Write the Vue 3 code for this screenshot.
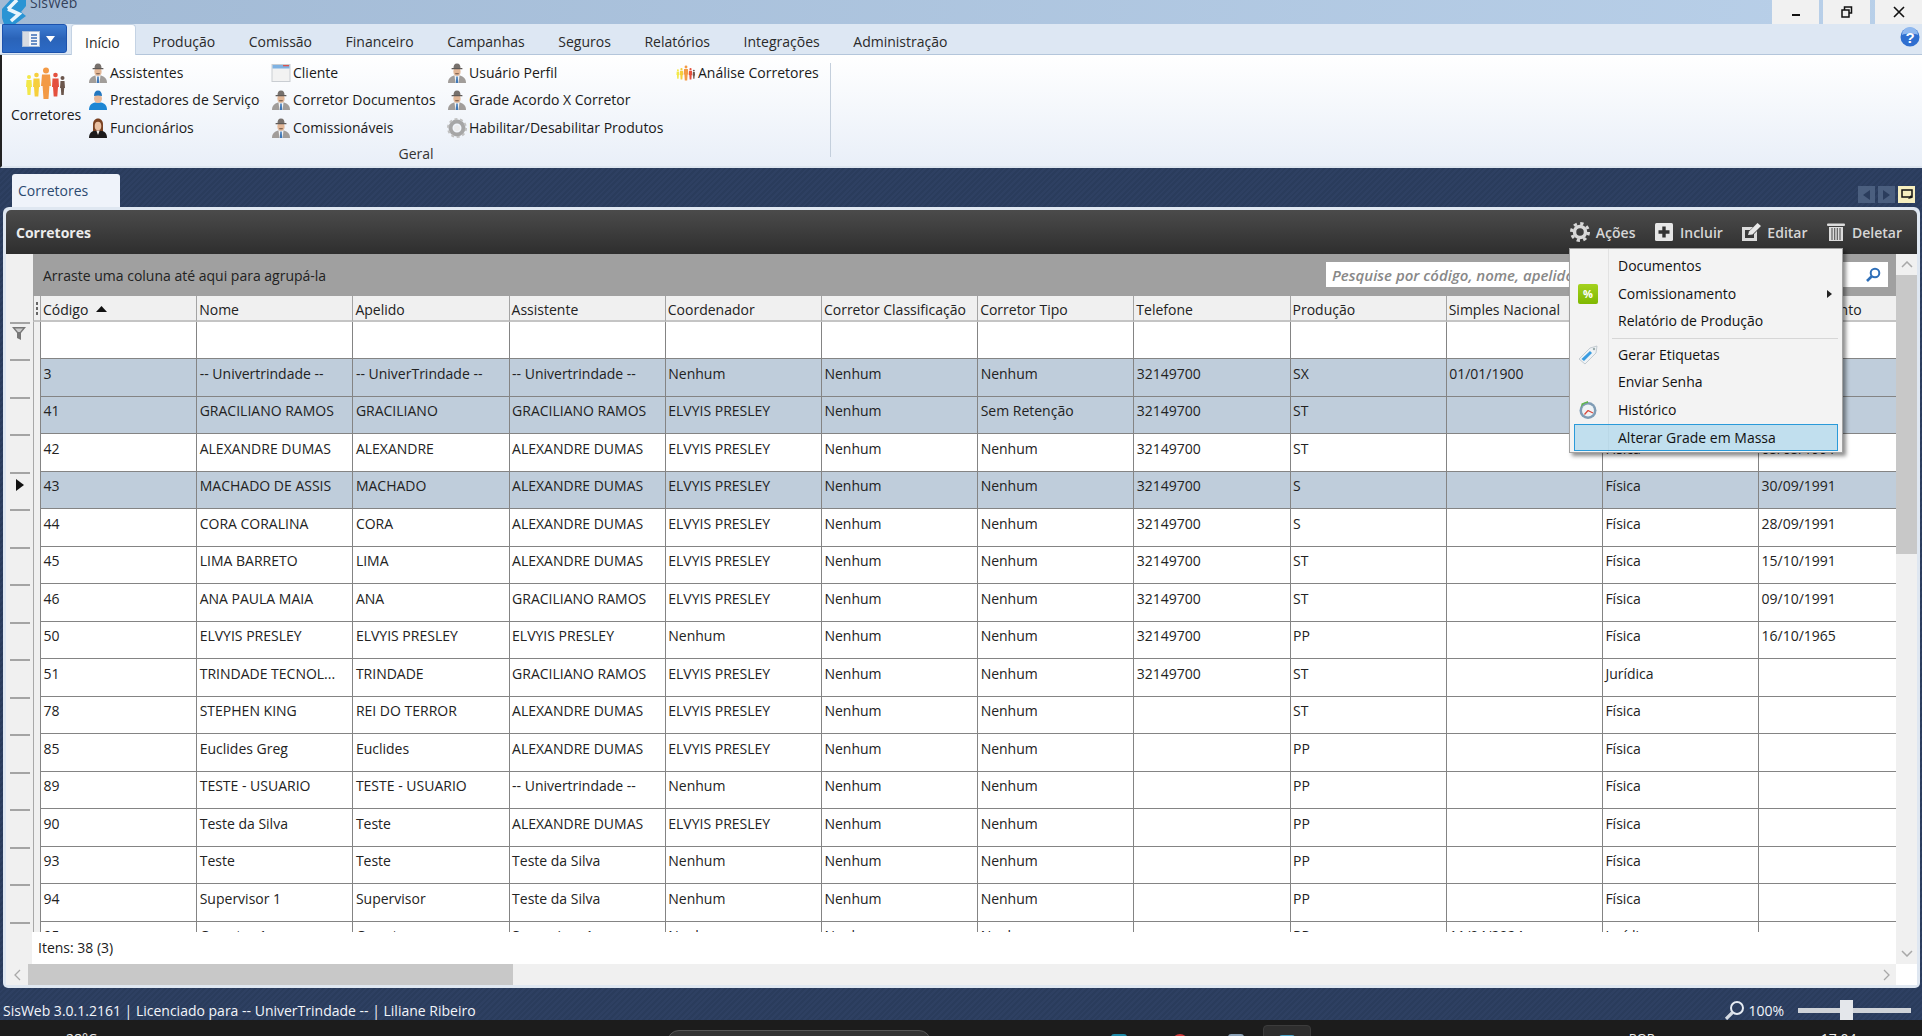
<script setup>
const tabs = ['Início','Produção','Comissão','Financeiro','Campanhas','Seguros','Relatórios','Integrações','Administração']
const ribbonCols = [
  { w: 183, items: [['suit','Assistentes'],['cap','Prestadores de Serviço'],['woman','Funcionários']] },
  { w: 176, items: [['win','Cliente'],['suit','Corretor Documentos'],['suit','Comissionáveis']] },
  { w: 229, items: [['suit','Usuário Perfil'],['suit','Grade Acordo X Corretor'],['gearc','Habilitar/Desabilitar Produtos']] },
  { w: 150, items: [['crowd','Análise Corretores']] },
]
const headers = ['Código','Nome','Apelido','Assistente','Coordenador','Corretor Classificação','Corretor Tipo','Telefone','Produção','Simples Nacional','Tipo Pessoa','Dt. Nascimento']
const U='-- Univertrindade --', E='ELVYIS PRESLEY', A='ALEXANDRE DUMAS', G='GRACILIANO RAMOS', N='Nenhum', T='32149700', F='Física', S='Teste da Silva'
const rows = [
  { sel:true, c:['3',U,'-- UniverTrindade --',U,N,N,N,T,'SX','01/01/1900','',''] },
  { sel:true, c:['41',G,'GRACILIANO',G,E,N,'Sem Retenção',T,'ST','','Física','01/01/1960'] },
  { c:['42',A,'ALEXANDRE',A,E,N,N,T,'ST','',F,'05/05/1991'] },
  { sel:true, cur:true, c:['43','MACHADO DE ASSIS','MACHADO',A,E,N,N,T,'S','',F,'30/09/1991'] },
  { c:['44','CORA CORALINA','CORA',A,E,N,N,T,'S','',F,'28/09/1991'] },
  { c:['45','LIMA BARRETO','LIMA',A,E,N,N,T,'ST','',F,'15/10/1991'] },
  { c:['46','ANA PAULA MAIA','ANA',G,E,N,N,T,'ST','',F,'09/10/1991'] },
  { c:['50',E,E,E,N,N,N,T,'PP','',F,'16/10/1965'] },
  { c:['51','TRINDADE TECNOL...','TRINDADE',G,E,N,N,T,'ST','','Jurídica',''] },
  { c:['78','STEPHEN KING','REI DO TERROR',A,E,N,N,'','ST','',F,''] },
  { c:['85','Euclides Greg','Euclides',A,E,N,N,'','PP','',F,''] },
  { c:['89','TESTE - USUARIO','TESTE - USUARIO',U,N,N,N,'','PP','',F,''] },
  { c:['90','Teste da Silva','Teste',A,E,N,N,'','PP','',F,''] },
  { c:['93','Teste','Teste',S,N,N,N,'','PP','',F,''] },
  { c:['94','Supervisor 1','Supervisor',S,N,N,N,'','PP','',F,''] },
  { c:['95','Corretor 1','Corretor','Supervisor 1',N,N,N,'','PP','11/04/2024','Jurídica',''] },
]
</script>

<template>
  <div class="app">
    <svg class="defs" width="0" height="0">
      <defs>
        <symbol id="suit" viewBox="0 0 20 20">
          <path d="M1 20c0-4.500 2.500-6.500 6-7.500h6c3.500 1 6 3 6 7.500z" fill="#a19d9a"/>
          <path d="M7.500 12.500h5L11.500 20h-3z" fill="#f2f4f6"/><path d="M9.300 13.500h1.400l.5 6.500H8.800z" fill="#3f78b8"/>
          <ellipse cx="10" cy="8.500" rx="3.600" ry="4.300" fill="#e2b797"/>
          <path d="M6.500 5.500C6.500 2 7.500.5 10 .5s3.500 1.500 3.500 5z" fill="#77716d"/>
          <rect x="4.500" y="5" width="11" height="1.300" rx=".6" fill="#5f5a57"/>
          <path d="M8 10.200h4l-.6 1h-2.800z" fill="#6b5040"/>
        </symbol>
        <symbol id="cap" viewBox="0 0 20 20">
          <path d="M1 20c0-5 3-7 6-7.500h6c3 .5 6 2.500 6 7.500z" fill="#1d86d4"/>
          <ellipse cx="10" cy="8.500" rx="4" ry="4.500" fill="#e8b898"/>
          <path d="M6 6c0-3.500 1.500-5.500 4-5.500s4 2 4 5.500c-2.500-.7-5.500-.7-8 0z" fill="#2277c0"/>
        </symbol>
        <symbol id="woman" viewBox="0 0 20 20">
          <path d="M1 20c0-5 3-7 6-7.500h6c3 .5 6 2.500 6 7.500z" fill="#1d1b1b"/>
          <path d="M5 13V6.500C5 3 7 .5 10 .5s5 2.500 5 6V13z" fill="#7a4222"/>
          <ellipse cx="10" cy="8" rx="3.300" ry="4.300" fill="#e9c0a2"/>
          <path d="M8.300 12.500h3.400L10 17z" fill="#f3ece6"/>
        </symbol>
        <symbol id="win" viewBox="0 0 20 20">
          <rect x="1" y="1.500" width="18" height="17" fill="#f2f2f2" stroke="#c9cdd2"/>
          <rect x="1.500" y="2" width="17" height="3.500" fill="#7fb2e2"/>
          <rect x="12" y="2" width="6" height="1.300" fill="#d9534f"/>
        </symbol>
        <symbol id="gearc" viewBox="0 0 20 20">
          <circle cx="10" cy="10" r="6.500" fill="none" stroke="#a6a6a6" stroke-width="4"/>
          <circle cx="10" cy="10" r="9" fill="none" stroke="#c0c0c0" stroke-width="2" stroke-dasharray="3 2.650"/>
          <circle cx="10" cy="10" r="3" fill="#ececec"/>
        </symbol>
        <symbol id="crowd" viewBox="0 0 42 32">
          <g fill="#f2e84a"><circle cx="4" cy="10" r="2"/><path d="M1.500 13h5l.5 7H6l-.5 8h-3L2 20H1z"/></g>
          <g fill="#f6cf3c"><circle cx="11.500" cy="8" r="2.300"/><path d="M8.500 11.500h6l.5 8.500h-1l-.7 9.500H9.700L9 20H8z"/></g>
          <g fill="#f39a45"><circle cx="21" cy="3.500" r="3"/><path d="M17 7.500h8l1 11.500h-1.600L23.500 32h-5L17.600 19H16z"/></g>
          <g fill="#e4503e"><circle cx="30.500" cy="8" r="2.300"/><path d="M27.500 11.500h6l.5 8.500h-1l-.7 9.500h-3.600L28 20h-1z"/></g>
          <g fill="#6b564c"><circle cx="37.500" cy="11" r="2"/><path d="M35.500 14h4l.5 7h-.8l-.5 7h-2.400l-.5-7H35z"/></g>
        </symbol>
      </defs>
    </svg>

    <header class="titlebar">
      <svg class="logo" viewBox="0 0 24 24" width="24" height="24">
        <path d="M0 9 L10 -2 H24 V6 L19 12 L24 16 L12 25 L2 24 L0 18 Z" fill="#2a94d4"/>
        <path d="M6 9 L15 0 M6 9 L17 14 L9 21" fill="none" stroke="#eaf5fc" stroke-width="3.600"/>
      </svg>
      <span class="apptitle">SisWeb</span>
      <div class="winbtns">
        <span class="winbtn"><svg width="10" height="10" viewBox="0 0 10 10"><rect x="1" y="7" width="8" height="2" fill="#111"/></svg></span>
        <span class="winbtn"><svg width="12" height="12" viewBox="0 0 12 12"><path d="M3.500 3.500V1h7v6H8M1 4h7v7H1z" fill="none" stroke="#111" stroke-width="1.500"/></svg></span>
        <span class="winbtn last"><svg width="12" height="12" viewBox="0 0 12 12"><path d="M1 1l10 10M11 1L1 11" stroke="#111" stroke-width="1.600"/></svg></span>
      </div>
    </header>

    <nav class="ribbontabs">
      <button class="startbtn">
        <svg width="18" height="16" viewBox="0 0 18 16"><rect x=".5" y=".5" width="17" height="15" fill="#f4f6f9" stroke="#a8bcd8"/><rect x="1" y="1" width="6" height="14" fill="#d7dbe2"/><path d="M9 4h6M9 7h6M9 10h6M9 13h6" stroke="#3b6db5" stroke-width="1.400"/></svg>
        <svg width="9" height="6" viewBox="0 0 9 6"><path d="M0 0h9L4.500 6z" fill="#fff"/></svg>
      </button>
      <span v-for="(t,i) in tabs" :key="t" class="rtab" :class="{active:i===0}">{{ t }}</span>
      <svg class="help" width="20" height="20" viewBox="0 0 20 20"><circle cx="10" cy="10" r="9.500" fill="#2f6fd0"/><path d="M2 8a8 8 0 0 1 16 0c-4-2-12-2-16 0z" fill="#8fb8ef"/><text x="10" y="15.500" text-anchor="middle" font-size="15" font-weight="700" fill="#fff" font-family="Liberation Sans, sans-serif">?</text></svg>
    </nav>

    <section class="ribbon">
      <div class="rgroup">
        <div class="rgroup-body">
          <div class="bigbtn">
            <svg width="42" height="32"><use href="#crowd"/></svg>
            <span>Corretores</span>
          </div>
          <div v-for="(col,i) in ribbonCols" :key="i" class="rcol" :style="{width: col.w+'px'}">
            <div v-for="it in col.items" :key="it[1]" class="ritem">
              <svg v-if="it[0]==='crowd'" class="ricon" width="20" height="16"><use href="#crowd"/></svg>
              <svg v-else class="ricon" width="20" height="20"><use :href="'#'+it[0]"/></svg>
              <span>{{ it[1] }}</span>
            </div>
          </div>
        </div>
        <div class="rgroup-label">Geral</div>
      </div>
    </section>

    <main class="workspace">
      <div class="doctabs">
        <span class="doctab">Corretores</span>
        <div class="docnav">
          <span class="navbtn"><svg width="7" height="10" viewBox="0 0 7 10"><path d="M7 0v10L0 5z" fill="#2b3d5d"/></svg></span>
          <span class="navbtn"><svg width="7" height="10" viewBox="0 0 7 10"><path d="M0 0v10l7-5z" fill="#2b3d5d"/></svg></span>
          <span class="navbtn on"><svg width="12" height="11" viewBox="0 0 12 11"><path d="M1 1h10v7H1z" fill="none" stroke="#111" stroke-width="1.500"/><path d="M7 10l4-1-1-3z" fill="#111"/></svg></span>
        </div>
      </div>

      <div class="panel">
        <div class="panelhead">
          <span class="paneltitle">Corretores</span>
          <div class="actions">
            <span class="action">
              <svg width="20" height="20" viewBox="0 0 20 20"><circle cx="10" cy="10" r="5.500" fill="none" stroke="#d8d8d8" stroke-width="3.500"/><circle cx="10" cy="10" r="8.500" fill="none" stroke="#d8d8d8" stroke-width="3" stroke-dasharray="3.300 3.370"/></svg>
              Ações
            </span>
            <span class="action">
              <svg width="20" height="20" viewBox="0 0 20 20"><rect x="1" y="1" width="18" height="18" rx="1.500" fill="#e6e6e6"/><path d="M10 4.500v11M4.500 10h11" stroke="#333" stroke-width="3.400"/></svg>
              Incluir
            </span>
            <span class="action">
              <svg width="20" height="20" viewBox="0 0 20 20"><path d="M1 5h11l-3 3H4v8h9v-4l3-3v10H1z" fill="#dcdcdc"/><path d="M7 13l1-3.500L16.500 1 20 4l-8.500 8.500z" fill="#e8e8e8"/></svg>
              Editar
            </span>
            <span class="action">
              <svg width="20" height="20" viewBox="0 0 20 20"><rect x="1" y="1.500" width="18" height="2.500" rx="1" fill="#dcdcdc"/><path d="M3 5h14v14H3z" fill="#dcdcdc"/><path d="M6 6v12M8.700 6v12M11.300 6v12M14 6v12" stroke="#555" stroke-width="1.100"/></svg>
              Deletar
            </span>
          </div>
        </div>

        <div class="content">
          <div class="gridpane">
            <div class="groupbar">
              <span>Arraste uma coluna até aqui para agrupá-la</span>
              <div class="search">
                <span class="ph">Pesquise por código, nome, apelido, assistente ou coordenador</span>
                <svg width="16" height="16" viewBox="0 0 16 16"><circle cx="10" cy="6" r="4.300" fill="none" stroke="#2f6fb8" stroke-width="2"/><path d="M6.800 9.300L2 14" stroke="#2f6fb8" stroke-width="2.600"/></svg>
              </div>
            </div>
            <div class="viewport">
              <div class="row headrow">
                <div class="gut nomark"></div>
                <div class="strip dots"><i></i><i></i><i></i></div>
                <div v-for="(h,i) in headers" :key="h" class="hcell">
                  {{ h }}<svg v-if="i===0" class="sort" width="11" height="6" viewBox="0 0 11 6"><path d="M5.500 0L11 6H0z" fill="#111"/></svg>
                </div>
              </div>
              <div class="row filterrow">
                <div class="gut">
                  <svg class="funnel" width="14" height="13" viewBox="0 0 14 13"><path d="M0 0h14L9 6v7L5 11V6z" fill="#777"/><path d="M3 1.500h8L8 5H6z" fill="#ccc"/></svg>
                </div>
                <div class="strip"></div>
                <div v-for="h in headers" :key="h" class="cell"></div>
              </div>
              <div v-for="r in rows" :key="r.c[0]" class="row" :class="{sel:r.sel}">
                <div class="gut">
                  <svg v-if="r.cur" class="cursor" width="8" height="12" viewBox="0 0 8 12"><path d="M0 0l8 6-8 6z" fill="#111"/></svg>
                </div>
                <div class="strip"></div>
                <div v-for="(v,i) in r.c" :key="i" class="cell">{{ v }}</div>
              </div>
            </div>
            <div class="itens">Itens: 38 (3)</div>
          </div>
          <div class="vscroll">
            <span class="sarrow"><svg width="12" height="7" viewBox="0 0 12 7"><path d="M1 6l5-5 5 5" fill="none" stroke="#a8a8a8" stroke-width="1.500"/></svg></span>
            <span class="vthumb"></span>
            <span class="vspace"></span>
            <span class="sarrow"><svg width="12" height="7" viewBox="0 0 12 7"><path d="M1 1l5 5 5-5" fill="none" stroke="#a8a8a8" stroke-width="1.500"/></svg></span>
          </div>
        </div>
        <div class="hscroll">
          <span class="harrow"><svg width="7" height="12" viewBox="0 0 7 12"><path d="M6 1L1 6l5 5" fill="none" stroke="#a8a8a8" stroke-width="1.300"/></svg></span>
          <span class="hthumb"></span>
          <span class="hspace"></span>
          <span class="harrow r"><svg width="7" height="12" viewBox="0 0 7 12"><path d="M1 1l5 5-5 5" fill="none" stroke="#a8a8a8" stroke-width="1.300"/></svg></span>
          <span class="corner"></span>
        </div>

        <div class="menu">
          <div class="mi">Documentos</div>
          <div class="mi">
            <span class="micon pct">%</span>Comissionamento
            <svg class="sub" width="5" height="8" viewBox="0 0 5 8"><path d="M0 0l5 4-5 4z" fill="#222"/></svg>
          </div>
          <div class="mi">Relatório de Produção</div>
          <div class="msep"></div>
          <div class="mi">
            <svg class="micon" width="20" height="20" viewBox="0 0 20 20"><path d="M1 14L12 3l7-2-1 7L7 19z" fill="#eef2f5" stroke="#b8c0c8" stroke-width=".8"/><path d="M3.500 14L12 6l2 2-8 8z" fill="#3a9ce0"/><circle cx="16" cy="4" r="1.200" fill="#9aa"/></svg>
            Gerar Etiquetas
          </div>
          <div class="mi">Enviar Senha</div>
          <div class="mi">
            <svg class="micon" width="20" height="20" viewBox="0 0 20 20"><circle cx="10" cy="10.500" r="8.500" fill="#7f9cb5"/><circle cx="10" cy="10.500" r="6" fill="#eef3f6"/><path d="M3 8a7.500 7.500 0 0 1 7-5V1L3.500 3.500z" fill="#5fb648"/><path d="M10 10.500l5 2.500M10 10.500L6.500 14.500" stroke="#d9483b" stroke-width="1.300"/></svg>
            Histórico
          </div>
          <div class="mi active">Alterar Grade em Massa</div>
        </div>
      </div>

      <footer class="statusbar">
        <span>SisWeb 3.0.1.2161 | Licenciado para -- UniverTrindade -- | Liliane Ribeiro</span>
        <div class="zoombox">
          <svg width="21" height="21" viewBox="0 0 21 21"><circle cx="13" cy="8" r="6" fill="none" stroke="#e6ebf2" stroke-width="2"/><path d="M8.500 12.500L2 19" stroke="#d5dbe3" stroke-width="3.200"/></svg>
          <span class="pct100">100%</span>
          <div class="slider"><span class="knob"></span></div>
        </div>
      </footer>
    </main>

    <div class="taskbar">
      <span class="tb-weather">28°C</span>
      <span class="tb-pill"></span>
      <span class="tb-dot teal"></span>
      <span class="tb-dot red"></span>
      <span class="tb-dot gray"></span>
      <span class="tb-active"><span class="tb-dot cyan"></span></span>
      <span class="tb-lang">POR</span>
      <span class="tb-clock">17:04</span>
    </div>
  </div>
</template>

<style>
html, body { margin: 0; background: #1c1c1c; }
</style>

<style scoped>
.app { width: 1922px; height: 1036px; overflow: hidden; display: flex; flex-direction: column; font-family: "Open Sans", "Noto Sans", sans-serif; font-size: 14px; color: #1a1a1a; background: #fff; }
.defs { position: absolute; }

.titlebar { height: 24px; flex: none; display: flex; background: linear-gradient(to right, #a2bad5, #b9d0e9); overflow: hidden; }
.logo { flex: none; margin-left: 2px; }
.apptitle { margin: -7px 0 0 4px; font-size: 14px; line-height: 20px; color: #33415a; }
.winbtns { margin-left: auto; display: flex; gap: 4px; }
.winbtn { width: 47px; height: 24px; background: #f1f1f1; display: flex; align-items: center; justify-content: center; }
.winbtn.last { width: 47px; margin-left: 1px; }

.ribbontabs { height: 31px; flex: none; box-sizing: border-box; display: flex; align-items: flex-end; background: #dde7f3; border-bottom: 1px solid #b4c6db; position: relative; }
.startbtn { width: 65px; height: 29px; margin: 0 4px 0 2px; align-self: flex-start; box-sizing: border-box; display: flex; align-items: center; justify-content: center; gap: 6px; padding: 0 0 0 8px; border: 1px solid #1c52ad; border-radius: 0 3px 3px 0; background: linear-gradient(#3f7ed4, #2a63b8 50%, #2c6ac6); }
.rtab { padding: 0 16.800px; height: 30px; line-height: 35px; font-size: 14px; color: #2a2a2a; box-sizing: border-box; }
.rtab.active { padding: 0 15px 0 13px; background: #fff; border: 1px solid #c4d3e4; border-bottom: 0; border-radius: 4px 4px 0 0; margin-bottom: -1px; height: 31px; }
.help { position: absolute; right: 2px; top: 3px; }

.ribbon { height: 113px; flex: none; box-sizing: border-box; display: flex; background: linear-gradient(#fff, #e9eff8); border-bottom: 2px solid #dde5ef; border-left: 2px solid #222; }
.rgroup { width: 829px; margin: 8px 0 9px; padding-left: 3px; border-right: 1px solid #c4cfdc; box-sizing: border-box; }
.rgroup-body { display: flex; height: 83px; }
.bigbtn { width: 83px; box-sizing: border-box; padding: 0 0 0 6px; display: flex; flex-direction: column; align-items: flex-start; }
.bigbtn svg { margin: 4px 0 0 14px; }
.bigbtn span { margin-top: 6px; line-height: 20px; }
.rcol { display: flex; flex-direction: column; margin-top: -4px; }
.ritem { height: 27.500px; flex: none; display: flex; align-items: center; gap: 2px; line-height: 20px; white-space: nowrap; }
.ricon { flex: none; }
.rgroup-label { text-align: center; line-height: 20px; margin-top: -2px; padding-right: 3px; color: #333; }

.workspace { flex: 1; min-height: 0; display: flex; flex-direction: column; background: repeating-linear-gradient(135deg, #2a3c5c 0 2px, #2e4062 2px 4px); }
.doctabs { height: 39px; flex: none; display: flex; align-items: flex-start; }
.doctab { margin: 6px 0 0 12px; width: 108px; height: 33px; box-sizing: border-box; padding-left: 6px; line-height: 33px; background: #eff3fa; border-radius: 3px 3px 0 0; color: #2c4a70; }
.docnav { margin: 18px 7px 0 auto; display: flex; gap: 3px; }
.navbtn { width: 17px; height: 17px; background: #4b5f7f; display: flex; align-items: center; justify-content: center; }
.navbtn.on { background: #f6efbf; }

.panel { position: relative; height: 781px; flex: none; margin: 0 2px 0 3px; box-sizing: border-box; padding: 3px; background: #dfe7f1; border-radius: 6px 6px 5px 5px; display: flex; flex-direction: column; }
.panelhead { height: 44px; flex: none; display: flex; align-items: center; justify-content: space-between; padding: 0 15px 0 10px; background: linear-gradient(#4b4b4b, #2e2e2e); border-radius: 5px 5px 0 0; }
.paneltitle { font-weight: 700; font-size: 14px; color: #ececec; }
.actions { display: flex; gap: 18.500px; }
.action { display: flex; align-items: center; gap: 6px; color: #d6d6d6; font-weight: 600; font-size: 14px; }

.content { display: flex; height: 710px; flex: none; }
.gridpane { width: 1890px; flex: none; background: #f0f0f0; display: flex; flex-direction: column; }
.groupbar { height: 42px; flex: none; margin-left: 27px; padding: 0 8px 0 10px; background: #a0a0a0; display: flex; align-items: center; justify-content: space-between; color: #222; }
.search { width: 562px; height: 25px; margin-top: -1px; box-sizing: border-box; padding: 0 7px 0 6px; background: #fff; display: flex; align-items: center; justify-content: space-between; overflow: hidden; }
.ph { color: #888; font-style: italic; font-weight: 600; font-size: 15px; white-space: nowrap; overflow: hidden; max-width: 520px; }
.viewport { height: 636px; flex: none; overflow: hidden; }
.row { display: grid; grid-template-columns: 27px 7px repeat(11, 156.200px) 1fr; height: 37.530px; }
.headrow { height: 26px; }
.filterrow { height: 37px; }
.gut { display: flex; flex-direction: column; align-items: center; }
.gut::before { content: ""; display: block; flex: none; align-self: stretch; height: 2px; margin: 0 3px 0 4px; background: #a4a4a4; }
.gut.nomark::before { display: none; }
.funnel { margin: 3px 2px 0 0; }
.cursor { margin-top: 5px; }
.strip { border-left: 1px solid #a8a8a8; box-sizing: border-box; background: #f0f0f0; }
.dots { display: flex; flex-direction: column; justify-content: center; gap: 2px; padding-left: 2px; border-bottom: 2px solid #c4c4c4; }
.dots i { display: block; width: 2px; height: 3px; background: #666; }
.hcell { box-sizing: border-box; padding: 0 0 0 2px; border-left: 1px solid #a4a4a4; border-bottom: 2px solid #c4c4c4; background: #f0f0f0; line-height: 27px; white-space: nowrap; color: #222; overflow: hidden; }
.sort { margin: 0 0 3px 8px; }
.cell { box-sizing: border-box; padding: 2.500px 0 0 2.500px; border-left: 1px solid #848484; border-bottom: 1px solid #848484; background: #fff; line-height: 24px; white-space: nowrap; overflow: hidden; color: #222; }
.sel .cell { background: #bfcddb; }
.itens { height: 32px; flex: none; margin-left: 26px; padding-left: 6px; line-height: 32px; background: #fff; }

.vscroll { width: 21px; flex: none; display: flex; flex-direction: column; background: #f0f0f0; }
.sarrow { height: 21px; flex: none; display: flex; align-items: center; justify-content: center; }
.vthumb { height: 279px; flex: none; background: #c8c8c8; }
.vspace { flex: 1; }

.hscroll { height: 21px; flex: none; display: flex; align-items: stretch; background: #f0f0f0; }
.harrow { width: 22px; flex: none; display: flex; align-items: center; justify-content: center; }
.harrow.r { width: 20px; }
.hthumb { width: 485px; flex: none; background: #c8c8c8; }
.hspace { flex: 1; }
.corner { width: 21px; flex: none; background: #fff; }

.menu { position: absolute; left: 1566px; top: 41px; width: 274px; height: 205px; box-sizing: border-box; padding-top: 4px; border: 1px solid #a2a2a2; background: linear-gradient(to right, transparent 38px, #e2e2e2 38px, #e2e2e2 39px, transparent 39px), #f3f3f3; box-shadow: 3px 3px 4px rgba(0,0,0,.45); color: #111; }
.mi { position: relative; height: 27.500px; box-sizing: border-box; padding-left: 48px; line-height: 26px; font-size: 14px; white-space: nowrap; }
.micon { position: absolute; left: 8px; top: 3px; }
.pct { width: 20px; height: 20px; background: linear-gradient(#a4d21e, #7fb800); border-radius: 2px; color: #fff; font-size: 11px; font-weight: 700; line-height: 20px; text-align: center; }
.sub { position: absolute; right: 10px; top: 9px; }
.msep { height: 1px; margin: 2px 4px 3px 42px; background: #d6d6d6; }
.mi.active { margin: 0 4px; padding-left: 43px; height: 27px; background: rgba(160,210,235,.6); border: 1px solid #2a9ad9; line-height: 25px; }

.statusbar { flex: 1; min-height: 0; display: flex; align-items: center; justify-content: space-between; padding: 12px 11px 0 3px; color: #f2f5fa; font-size: 14px; overflow: hidden; }
.zoombox { display: flex; align-items: center; height: 100%; }
.pct100 { margin: 0 14px 0 3px; }
.slider { width: 113px; height: 5px; background: #cfd3d8; position: relative; }
.knob { position: absolute; left: 42px; top: -8px; width: 13px; height: 21px; background: #e4e7eb; }

.taskbar { height: 16px; flex: none; background: #1c1c1c; display: flex; align-items: flex-start; overflow: hidden; color: #eee; font-size: 14px; position: relative; }
.tb-weather { margin: 9px 0 0 66px; line-height: 20px; }
.tb-pill { width: 264px; height: 24px; margin: 10px 0 0 570px; background: #333; border: 1px solid #555; border-radius: 12px; box-sizing: border-box; }
.tb-dot { width: 16px; height: 16px; border-radius: 3px; flex: none; margin-top: 14px; }
.teal { margin-left: 180px; background: #1e8aa8; }
.red { margin-left: 45px; background: #d33a3a; border-radius: 50%; }
.gray { margin-left: 40px; background: #8aa0b5; }
.tb-active { width: 48px; height: 24px; margin: 5px 0 0 19px; background: #2e2e2e; border: 1px solid #3c3c3c; border-radius: 4px; box-sizing: border-box; display: flex; justify-content: center; }
.cyan { margin-top: 9px; background: #4aa3c8; }
.tb-lang { margin: 8px 0 0 318px; line-height: 20px; font-size: 13px; }
.tb-clock { margin: 9px 0 0 166px; line-height: 20px; }
</style>
